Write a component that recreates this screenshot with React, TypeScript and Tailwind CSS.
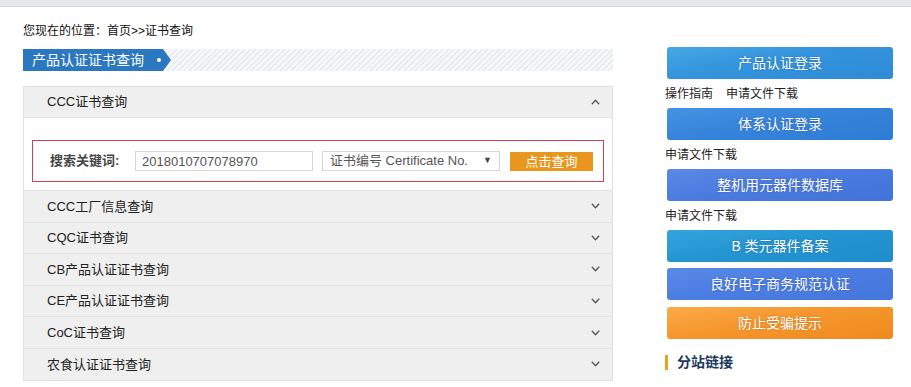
import { useState } from "react";

const font = "font-['Liberation_Sans','Noto_Sans_CJK_SC',sans-serif]";

const items = [
  "CCC工厂信息查询",
  "CQC证书查询",
  "CB产品认证证书查询",
  "CE产品认证证书查询",
  "CoC证书查询",
  "农食认证证书查询",
];

const Chevron = ({ up }: { up?: boolean }) => (
  <svg width="9" height="6" viewBox="0 0 9 6" className={up ? "" : "rotate-180"}>
    <path d="M0.8 5.2 L4.5 1.3 L8.2 5.2" fill="none" stroke="#555" strokeWidth="1.3" />
  </svg>
);

const SideButton = ({ label, tone }: { label: string; tone: string }) => (
  <div
    className={`h-8 w-[226px] ml-[2px] rounded-[3px] flex items-center justify-center text-white text-[14px] [text-shadow:0_0_2px_rgba(0,0,0,0.25)] ${tone}`}
  >
    {label}
  </div>
);

const App = () => {
  const [keyword, setKeyword] = useState("2018010707078970");

  return (
    <div className={`w-[911px] h-[387px] overflow-hidden bg-white text-[#222] ${font}`}>
      <div className="h-[7px] bg-[#e4e8ec] border-b border-[#d3dade]" />
      <div className="flex pl-[23px]">
        {/* left column */}
        <div className="w-[590px]">
          <div className="mt-[16px] text-[12px] leading-4 text-[#111]">
            您现在的位置：首页&gt;&gt;证书查询
          </div>
          <div className="mt-[10px] h-[22px] flex bg-[repeating-linear-gradient(135deg,#e9edf2_0px,#e9edf2_2px,#f6f8fa_2px,#f6f8fa_4px)]">
            <div className="relative h-full w-[140px] bg-[#2b78c0] text-white text-[14px] flex items-center pl-[9px]">
              产品认证证书查询
              <span className="absolute left-[134px] top-[9px] w-1 h-1 rounded-full bg-white" />
            </div>
            <div className="h-full w-0 border-y-[11px] border-y-transparent border-l-[8px] border-l-[#2b78c0]" />
          </div>

          <div className="mt-[15px] border border-[#e0e0e0]">
            <div className="h-[31px] bg-[#efefef] flex items-center justify-between pl-[23px] pr-[12px] text-[13px] border-b border-[#e3e3e3]">
              <span>CCC证书查询</span>
              <Chevron up />
            </div>
            <div className="h-[72px] bg-white pt-[22px] px-[8px]">
              <div className="h-[42px] border border-[#c9444c] flex items-center pl-[17px] text-[13px]">
                <span className="font-bold text-[#444] w-[85px]">搜索关键词:</span>
                <input
                  value={keyword}
                  onChange={(e) => setKeyword(e.target.value)}
                  className="w-[178px] h-[20px] border border-[#d6d6d6] px-[6px] text-[13px] text-[#555] outline-none"
                />
                <div className="ml-[9px] w-[178px] h-[20px] border border-[#d6d6d6] flex items-center justify-between px-[7px] text-[#555]">
                  <span>证书编号 Certificate No.</span>
                  <span className="text-[9px] text-[#444]">▼</span>
                </div>
                <button className="ml-[10px] w-[83px] h-[19px] bg-[#e8961e] text-white text-[13px] leading-none">
                  点击查询
                </button>
              </div>
            </div>
            {items.map((t) => (
              <div
                key={t}
                className="h-[31.6px] bg-[#efefef] flex items-center justify-between pl-[23px] pr-[12px] text-[13px] border-t border-[#e2e2e2]"
              >
                <span>{t}</span>
                <Chevron />
              </div>
            ))}
          </div>
        </div>

        {/* right column */}
        <div className="ml-[52px] pt-[40px] w-[228px] text-[12px] text-[#222]">
          <SideButton label="产品认证登录" tone="bg-[linear-gradient(170deg,#46a7e6,#3393dc_45%,#2f8cd6)]" />
          <div className="h-[29px] flex items-center gap-[13px]">
            <span>操作指南</span>
            <span>申请文件下载</span>
          </div>
          <SideButton label="体系认证登录" tone="bg-[linear-gradient(170deg,#4594e3,#3683db_45%,#2f7cd6)]" />
          <div className="h-[29px] flex items-center">申请文件下载</div>
          <SideButton label="整机用元器件数据库" tone="bg-[linear-gradient(170deg,#5a8ae6,#4a7be0_45%,#4273da)]" />
          <div className="h-[29px] flex items-center">申请文件下载</div>
          <SideButton label="B 类元器件备案" tone="bg-[linear-gradient(170deg,#33a5dc,#2495d2_45%,#1f8dcb)]" />
          <div className="h-[6px]" />
          <SideButton label="良好电子商务规范认证" tone="bg-[linear-gradient(170deg,#5a8ae8,#4b7de2_45%,#4576dc)]" />
          <div className="h-[7px]" />
          <SideButton label="防止受骗提示" tone="bg-[linear-gradient(170deg,#fbab4a,#f5962c_45%,#f08a1e)]" />
          <div className="mt-[16px] flex items-center h-[15px]">
            <span className="w-[3px] h-[15px] bg-[#f0a020]" />
            <span className="ml-[9px] text-[14px] font-bold text-[#1c3a5e]">分站链接</span>
          </div>
          <div className="mt-[17px] border-t border-[#cfcfcf] w-[231px]" />
        </div>
      </div>
    </div>
  );
};

export default App;
